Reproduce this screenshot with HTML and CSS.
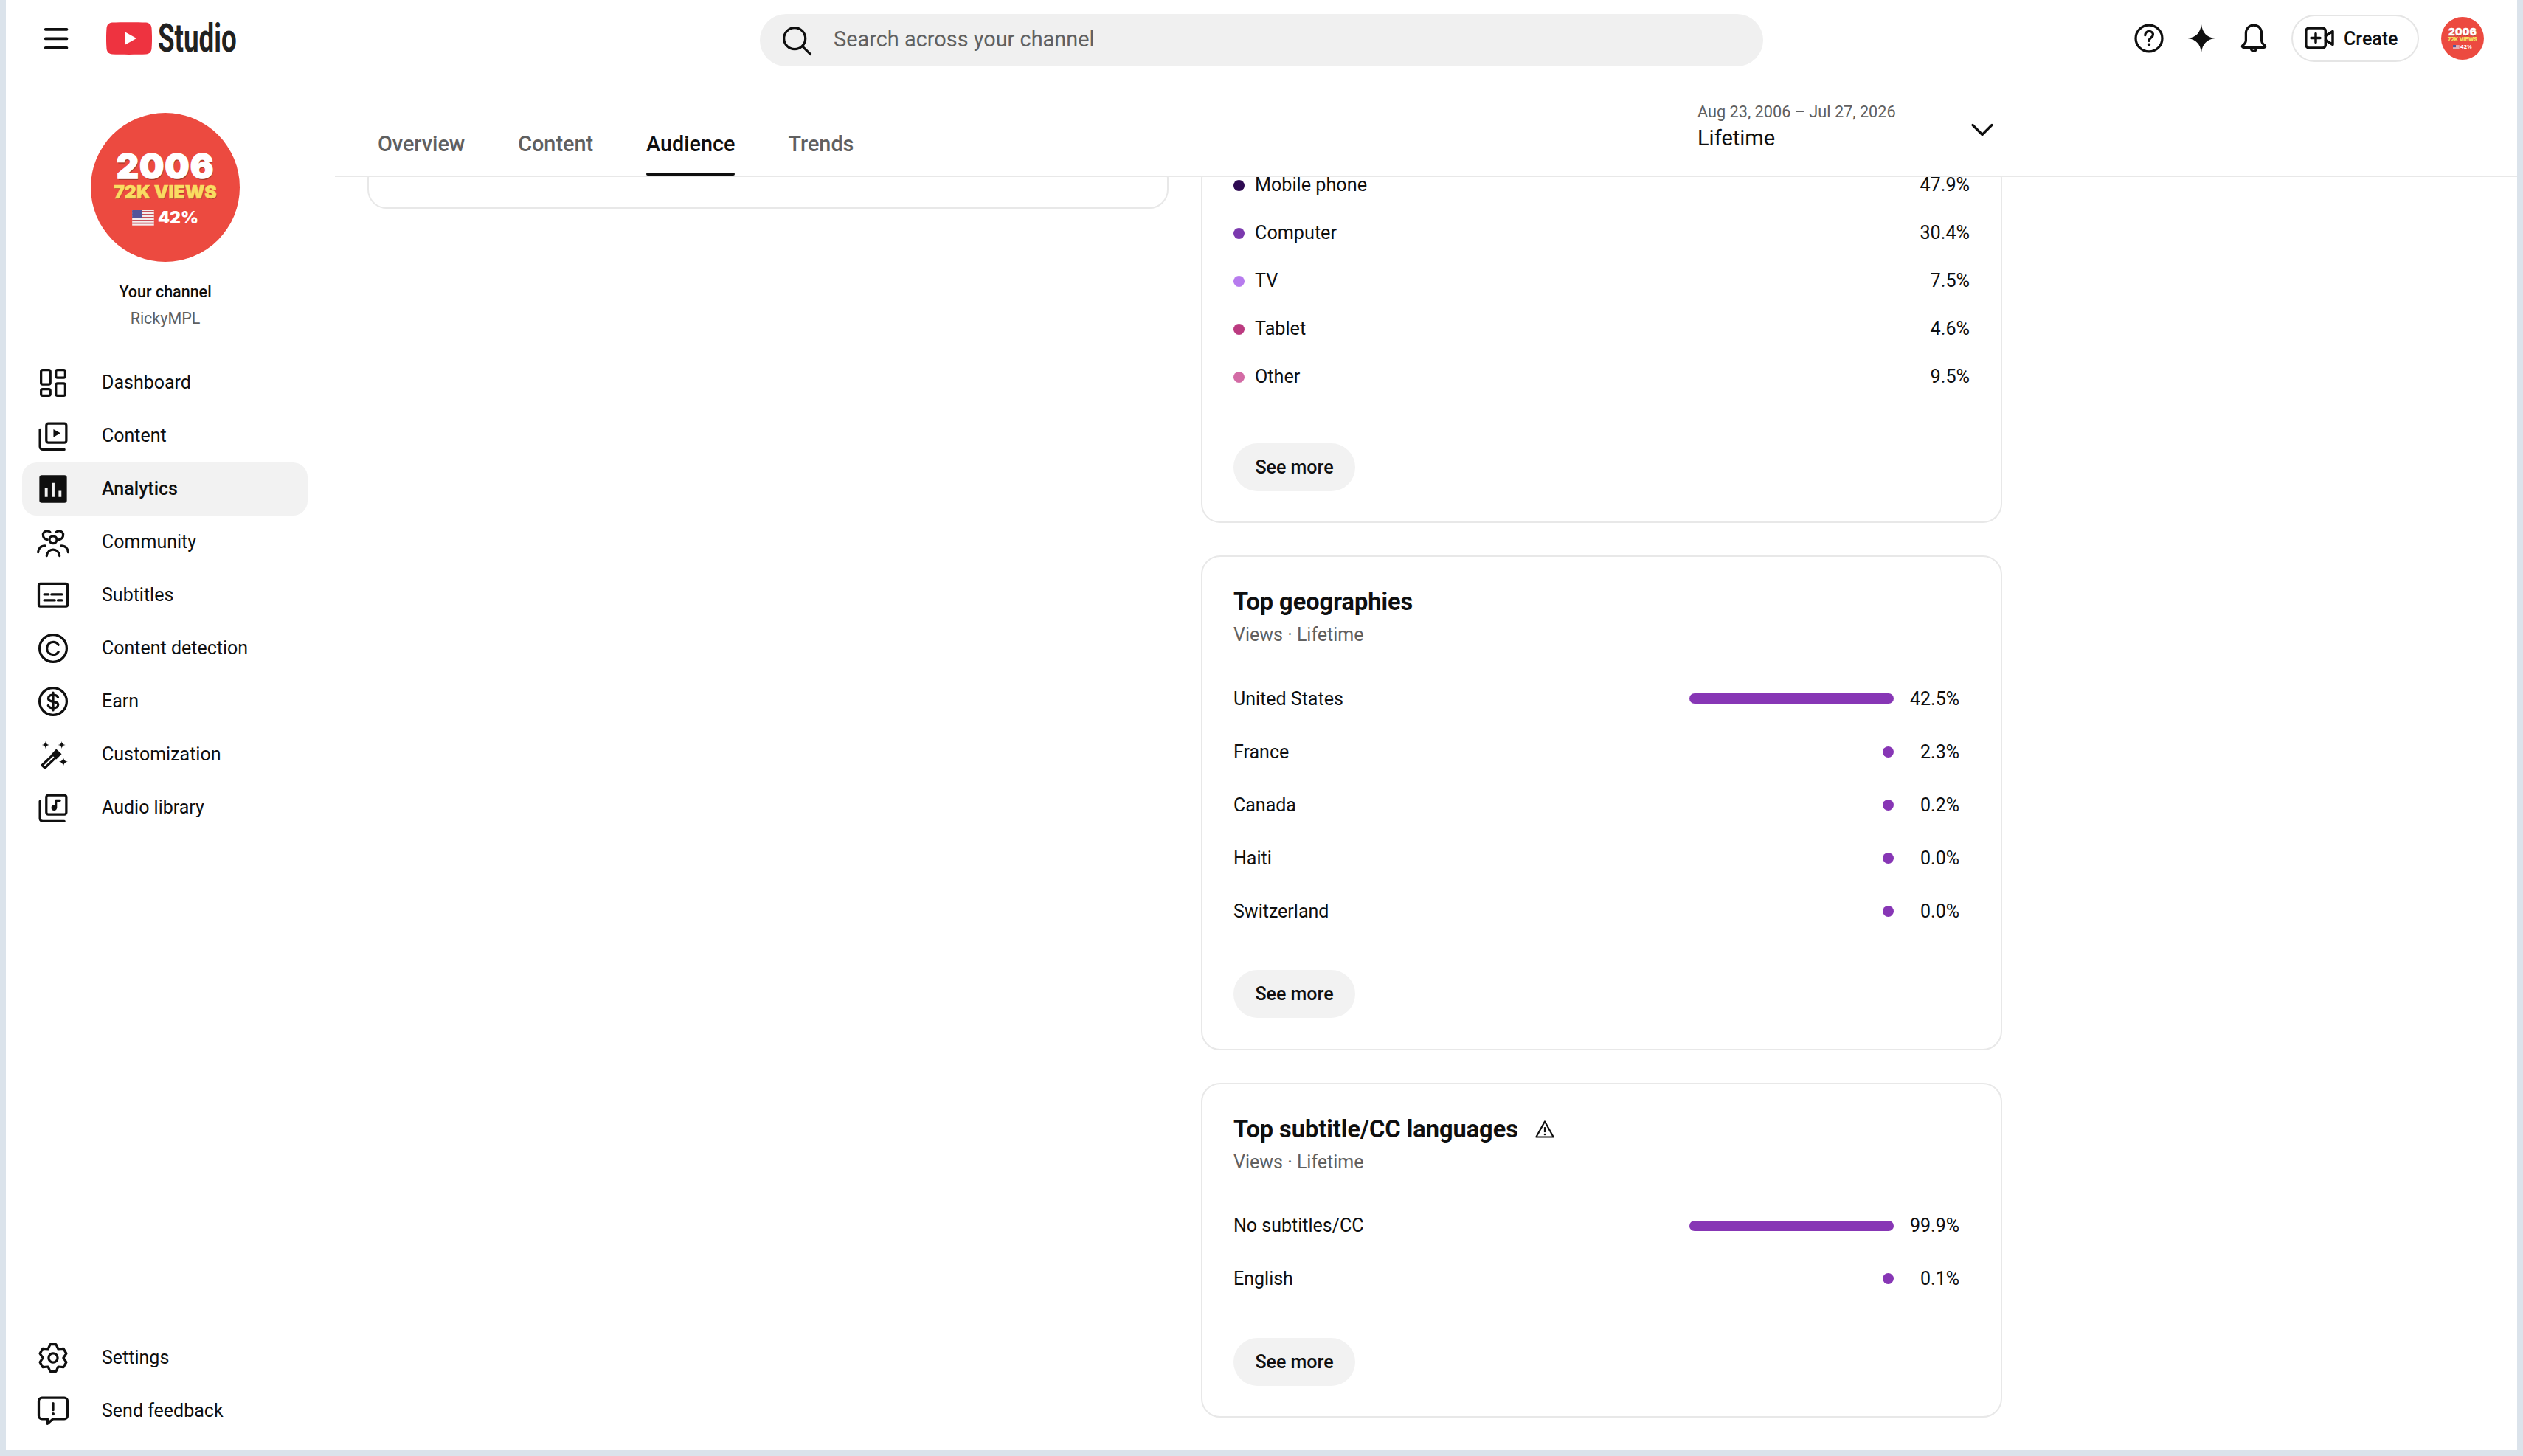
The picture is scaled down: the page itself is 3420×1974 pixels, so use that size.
FILE: index.html
```html
<!DOCTYPE html>
<html lang="en">
<head>
    <meta charset="UTF-8">
    <meta name="viewport" content="width=device-width, initial-scale=1.0">
    <title>Channel analytics - YouTube Studio</title>
    <link rel="stylesheet" href="styles.css">
</head>
<body>
    <div class="app">
        <header class="topbar">
            <div class="brand">
                <svg class="icon" viewBox="0 0 24 24"><path class="line thick" d="M5.400 6.400h13.300M5.400 12.200h13.300M5.400 17.900h13.300"/></svg>
                <svg class="logo-mark" viewBox="0 0 62 44"><path fill="#ee3340" d="M8 0.5C20 0 42 0 54 0.5C58.5 1 61 3.5 61.5 8C62.2 17 62.2 27 61.5 36C61 40.5 58.5 43 54 43.5C42 44 20 44 8 43.5C3.5 43 1 40.5 0.5 36C-0.2 27 -0.2 17 0.5 8C1 3.5 3.5 1 8 0.5Z"/><path fill="#fff" d="M25 13L41 22L25 31Z"/></svg>
                <span class="logo-text">Studio</span>
            </div>
            <div class="search">
                <svg class="icon" viewBox="0 0 24 24"><circle class="line" cx="10.7" cy="10.7" r="6.7"/><path class="line" d="M15.6 15.6L20.5 20.5"/></svg>
                <span class="search-text">Search across your channel</span>
            </div>
            <div class="actions">
                <svg class="icon" viewBox="0 0 24 24"><circle class="line" cx="12" cy="12" r="8.3"/><path class="line" d="M9.6 10c0-1.5 1.1-2.4 2.5-2.4s2.4.9 2.4 2.1c0 1.8-2.5 1.9-2.5 3.9"/><circle cx="12" cy="16" r="1" fill="#0f0f0f"/></svg>
                <svg class="icon" viewBox="0 0 24 24"><path fill="#0f0f0f" d="M12 3.2C12.7 8.5 15.2 11.2 20.5 12C15.2 12.8 12.7 15.5 12 20.8C11.3 15.5 8.8 12.8 3.5 12C8.8 11.2 11.3 8.5 12 3.2Z"/></svg>
                <svg class="icon" viewBox="0 0 24 24"><path class="line" d="M12 3.8c-3 0-4.9 2.2-4.9 5.1v4.2c0 1.4-.8 2.4-2 3.3-.6.5-.3 1.3.4 1.3h13c.7 0 1-.8.4-1.3-1.2-.9-2-1.9-2-3.3V8.900c0-2.900-1.900-5.100-4.900-5.100Z"/><path class="line" d="M10.200 18c0 1.100.8 2 1.800 2s1.800-.9 1.800-2"/></svg>
                <div class="create">
                    <svg class="create-icon" viewBox="0 0 40 32"><rect class="line-px" x="1.800" y="2" width="26.500" height="27" rx="4"/><path class="line-px" d="M15 9.500v12M9 15.500h12"/><path class="line-px" d="M28.500 12.500L38 6.500V24.500L28.500 18.500"/></svg>
                    <span>Create</span>
                </div>
                <div class="avatar avatar-small">
                    <span class="avatar-year">2006</span>
                    <span class="avatar-views">72K VIEWS</span>
                    <span class="avatar-share"><svg class="flag" viewBox="0 0 30 21"><rect width="30" height="21" fill="#f4eeee"/><path stroke="#c8505a" stroke-width="1.800" d="M0 2h30M0 6h30M0 10h30M0 14h30M0 18h30"/><rect width="14" height="11" fill="#52559a"/></svg>42%</span>
                </div>
            </div>
        </header>

        <div class="workspace">
            <aside class="sidebar">
                <div class="channel">
                    <div class="avatar avatar-large">
                        <span class="avatar-year">2006</span>
                        <span class="avatar-views">72K VIEWS</span>
                        <span class="avatar-share"><svg class="flag" viewBox="0 0 30 21"><rect width="30" height="21" fill="#f4eeee"/><path stroke="#c8505a" stroke-width="1.800" d="M0 2h30M0 6h30M0 10h30M0 14h30M0 18h30"/><rect width="14" height="11" fill="#52559a"/></svg>42%</span>
                    </div>
                    <div class="channel-title">Your channel</div>
                    <div class="channel-name">RickyMPL</div>
                </div>
                <nav class="nav">
                    <a class="nav-item">
                        <svg class="icon" viewBox="0 0 24 24"><rect class="line" x="4.450" y="4" width="5.800" height="9" rx="1"/><rect class="line" x="4.450" y="16" width="5.800" height="4" rx="1"/><rect class="line" x="13.750" y="4" width="5.800" height="4.800" rx="1"/><rect class="line" x="13.750" y="12.400" width="5.800" height="7.600" rx="1"/></svg>
                        Dashboard
                    </a>
                    <a class="nav-item">
                        <svg class="icon" viewBox="0 0 24 24"><rect class="line" x="7.750" y="4.250" width="12.500" height="12" rx="1.200"/><path class="line" d="M3.750 8v10.700c0 1 .8 1.800 1.800 1.800H19"/><path fill="#0f0f0f" d="M12.200 7.800L16.600 10.300L12.200 12.800Z"/></svg>
                        Content
                    </a>
                    <a class="nav-item active">
                        <svg class="icon" viewBox="0 0 24 24"><rect x="3.400" y="3.400" width="17.200" height="17.200" rx="1.500" fill="#0f0f0f"/><path stroke="#f2f2f2" stroke-width="1.800" d="M7.700 17v-5.500M12 17V8.200M16.300 17v-3.800"/></svg>
                        Analytics
                    </a>
                    <a class="nav-item">
                        <svg class="icon" viewBox="0 0 24 24"><circle class="line" cx="12" cy="10.500" r="2.300"/><path class="line" d="M8 20.600c.3-2.400 1.900-3.900 4-3.900s3.700 1.500 4 3.900"/><path class="line" d="M8.300 10.400C6.700 10.200 5.700 9 5.700 7.500S6.800 5 8.200 5c.8 0 1.400.2 1.900.7"/><path class="line" d="M15.700 10.400c1.600-.2 2.600-1.400 2.600-2.900S17.200 5 15.800 5c-.8 0-1.400.2-1.900.7"/><path class="line" d="M2.600 18.300c.2-2.500 1.800-4.100 4.400-4.100"/><path class="line" d="M21.400 18.300c-.2-2.500-1.800-4.100-4.400-4.100"/></svg>
                        Community
                    </a>
                    <a class="nav-item">
                        <svg class="icon" viewBox="0 0 24 24"><rect class="line" x="3" y="4.800" width="18" height="14.200" rx="1"/><path class="line" d="M6.500 11.500h2.600M11 11.500h6.500M6.500 15.200h6.500M15 15.200h2.500"/></svg>
                        Subtitles
                    </a>
                    <a class="nav-item">
                        <svg class="icon" viewBox="0 0 24 24"><circle class="line" cx="12" cy="12" r="8.500"/><path class="line" d="M15.300 9.800c-.7-1.200-1.900-1.800-3.200-1.800-2.300 0-4 1.700-4 4s1.700 4 4 4c1.300 0 2.500-.6 3.200-1.800"/></svg>
                        Content detection
                    </a>
                    <a class="nav-item">
                        <svg class="icon" viewBox="0 0 24 24"><circle class="line" cx="12" cy="12" r="8.500"/><path class="line" d="M15 9.400c-.5-1-1.600-1.500-3-1.500-1.700 0-3 .8-3 2.100 0 3 6.100 1.300 6.100 4.100 0 1.300-1.400 2.100-3.100 2.100-1.500 0-2.600-.6-3.100-1.700M12 6.500v11"/></svg>
                        Earn
                    </a>
                    <a class="nav-item">
                        <svg class="icon" viewBox="0 0 24 24"><path fill="#0f0f0f" d="M7.300 3.700Q7.500 5.800 9.600 6Q7.500 6.200 7.300 8.300Q7.100 6.200 5 6Q7.100 5.800 7.300 3.700ZM17.400 3.700Q17.600 5.800 19.700 6Q17.600 6.200 17.400 8.300Q17.200 6.200 15.100 6Q17.200 5.800 17.400 3.700ZM18.400 13.700Q18.700 16.200 21.200 16.500Q18.700 16.800 18.400 19.300Q18.100 16.800 15.600 16.500Q18.100 16.200 18.400 13.700Z"/><path class="line" d="M5.100 18.700L13.300 10.800L15 12.500L6.900 20.300Z"/><path stroke="#0f0f0f" stroke-width="2.400" d="M12.500 11.800L14 13.300L15.600 11.700L14 10.200Z"/></svg>
                        Customization
                    </a>
                    <a class="nav-item">
                        <svg class="icon" viewBox="0 0 24 24"><rect class="line" x="7.750" y="4.250" width="12.500" height="12" rx="1.200"/><path class="line" d="M3.750 8v10.700c0 1 .8 1.800 1.800 1.800H19"/><circle cx="12.600" cy="12.100" r="1.700" fill="#0f0f0f"/><path class="line" d="M13.700 12V7.500h2.500"/></svg>
                        Audio library
                    </a>
                </nav>
                <nav class="nav nav-bottom">
                    <a class="nav-item">
                        <svg class="icon" viewBox="0 0 24 24"><polygon class="line" points="10.200,3.500 13.800,3.500 15.200,6.460 18.460,6.190 20.260,9.310 18.400,12 20.260,14.690 18.460,17.810 15.200,17.540 13.800,20.500 10.200,20.500 8.800,17.540 5.540,17.810 3.740,14.690 5.600,12 3.740,9.310 5.540,6.190 8.800,6.460"/><circle class="line" cx="12" cy="12" r="2.800"/></svg>
                        Settings
                    </a>
                    <a class="nav-item">
                        <svg class="icon" viewBox="0 0 24 24"><path class="line" d="M5 3.750H19a2 2 0 0 1 2 2V15a2 2 0 0 1-2 2H12L8.500 20V17H5a2 2 0 0 1-2-2V5.750a2 2 0 0 1 2-2Z"/><path class="line" d="M12 7.200v4.200"/><circle cx="12" cy="13.900" r=".95" fill="#0f0f0f"/></svg>
                        Send feedback
                    </a>
                </nav>
            </aside>

            <main class="main">
                <div class="tabs-bar">
                    <div class="tabs">
                        <a class="tab">Overview</a>
                        <a class="tab">Content</a>
                        <a class="tab active">Audience</a>
                        <a class="tab">Trends</a>
                    </div>
                    <div class="date-range">
                        <div>
                            <div class="date-span">Aug 23, 2006 – Jul 27, 2026</div>
                            <div class="date-label">Lifetime</div>
                        </div>
                        <svg class="icon chevron" viewBox="0 0 24 24"><path class="line" d="M6 9L12 15L18 9"/></svg>
                    </div>
                </div>

                <div class="scroller">
                    <div class="columns">
                        <div class="column">
                            <section class="card card-stub"></section>
                        </div>
                        <div class="column">
                            <section class="card card-devices">
                                <div class="legend-row"><i class="dot dot-mobile"></i><span class="legend-name">Mobile phone</span><span>47.9%</span></div>
                                <div class="legend-row"><i class="dot dot-computer"></i><span class="legend-name">Computer</span><span>30.4%</span></div>
                                <div class="legend-row"><i class="dot dot-tv"></i><span class="legend-name">TV</span><span>7.5%</span></div>
                                <div class="legend-row"><i class="dot dot-tablet"></i><span class="legend-name">Tablet</span><span>4.6%</span></div>
                                <div class="legend-row"><i class="dot dot-other"></i><span class="legend-name">Other</span><span>9.5%</span></div>
                                <button class="see-more see-more-wide">See more</button>
                            </section>

                            <section class="card">
                                <h2 class="card-title">Top geographies</h2>
                                <div class="card-sub">Views · Lifetime</div>
                                <div class="rows">
                                    <div class="row"><span class="row-name">United States</span><div class="track"><div class="bar"></div></div><span class="pct">42.5%</span></div>
                                    <div class="row"><span class="row-name">France</span><div class="track"><i class="bar-dot"></i></div><span class="pct">2.3%</span></div>
                                    <div class="row"><span class="row-name">Canada</span><div class="track"><i class="bar-dot"></i></div><span class="pct">0.2%</span></div>
                                    <div class="row"><span class="row-name">Haiti</span><div class="track"><i class="bar-dot"></i></div><span class="pct">0.0%</span></div>
                                    <div class="row"><span class="row-name">Switzerland</span><div class="track"><i class="bar-dot"></i></div><span class="pct">0.0%</span></div>
                                </div>
                                <button class="see-more">See more</button>
                            </section>

                            <section class="card">
                                <h2 class="card-title">Top subtitle/CC languages
                                    <svg class="warn" viewBox="0 0 24 24"><path class="warn-line" d="M12 3L22 21H2Z"/><path class="warn-line" d="M12 9.500v6"/><circle cx="12" cy="18" r="1.100" fill="#0f0f0f"/></svg>
                                </h2>
                                <div class="card-sub">Views · Lifetime</div>
                                <div class="rows">
                                    <div class="row"><span class="row-name">No subtitles/CC</span><div class="track"><div class="bar"></div></div><span class="pct">99.9%</span></div>
                                    <div class="row"><span class="row-name">English</span><div class="track"><i class="bar-dot"></i></div><span class="pct">0.1%</span></div>
                                </div>
                                <button class="see-more">See more</button>
                            </section>
                        </div>
                    </div>
                </div>
            </main>
        </div>
    </div>
</body>
</html>
```

FILE: styles.css
```css
* {
    margin: 0;
    padding: 0;
    box-sizing: border-box;
}

body {
    font-family: 'Roboto', sans-serif;
    background: #dbe3eb;
    color: #0f0f0f;
    height: 1974px;
    padding: 0 8px 8px;
    overflow: hidden;
}

.app {
    background: #fff;
    height: 1966px;
    display: flex;
    flex-direction: column;
    overflow: hidden;
}

.icon {
    width: 52px;
    height: 52px;
    flex: none;
    display: block;
}

.line {
    fill: none;
    stroke: #0f0f0f;
    stroke-width: 1.5;
    stroke-linecap: round;
    stroke-linejoin: round;
}

.thick {
    stroke-width: 1.7;
}

.line-px {
    fill: none;
    stroke: #0f0f0f;
    stroke-width: 3.500;
    stroke-linecap: round;
    stroke-linejoin: round;
}

/* top bar */
.topbar {
    height: 104px;
    flex: none;
    display: flex;
    align-items: center;
}

.brand {
    width: 1022px;
    display: flex;
    align-items: center;
    padding-left: 42px;
}

.logo-mark {
    width: 62px;
    height: 44px;
    margin-left: 42px;
}

.logo-text {
    font-weight: 700;
    font-size: 54px;
    line-height: 44px;
    color: #212121;
    margin-left: 8px;
    transform: scaleX(0.68);
    transform-origin: left center;
}

.search {
    width: 1360px;
    height: 71px;
    margin-top: 5px;
    border-radius: 36px;
    background: #f0f0f0;
    display: flex;
    align-items: center;
    gap: 24px;
    padding-left: 24px;
    font-size: 28.900px;
    color: #606060;
}

.search-text {
    padding-bottom: 3px;
}

.actions {
    flex: 1;
    display: flex;
    align-items: center;
    justify-content: flex-end;
    gap: 19px;
    padding-right: 45px;
}

.create {
    width: 173px;
    height: 64px;
    margin-left: 6px;
    border: 2px solid #e5e5e5;
    border-radius: 32px;
    display: flex;
    align-items: center;
    gap: 13px;
    padding-left: 16px;
    font-size: 25px;
    font-weight: 500;
}

.create-icon {
    width: 40px;
    height: 32px;
    flex: none;
}

/* channel thumbnail, sized in em so both copies share it */
.avatar {
    border-radius: 50%;
    background: #ec4a40;
    color: #fff;
    font-family: 'Inter', 'Liberation Sans', sans-serif;
    font-weight: 900;
    display: flex;
    flex-direction: column;
    align-items: center;
    justify-content: center;
    flex: none;
    line-height: 1;
    overflow: hidden;
}

.avatar-large {
    width: 202px;
    height: 202px;
    font-size: 10px;
}

.avatar-small {
    width: 58px;
    height: 58px;
    margin-left: 11px;
    font-size: 2.870px;
}

.avatar-year {
    font-size: 4.700em;
    letter-spacing: 0.02em;
    -webkit-text-stroke: 0.03em #fff;
    text-shadow: 0.02em 0.04em 0 #a83a2a;
}

.avatar-views {
    font-size: 2.480em;
    color: #f9dc62;
    -webkit-text-stroke: 0.02em #f9dc62;
    text-shadow: 0.03em 0.05em 0 #a83a2a;
}

.avatar-share {
    font-size: 2.300em;
    display: flex;
    align-items: center;
    gap: 0.22em;
    margin-top: 0.5em;
}

.flag {
    width: 1.300em;
    height: 0.900em;
}

/* sidebar */
.workspace {
    flex: 1;
    display: flex;
    min-height: 0;
}

.sidebar {
    width: 446px;
    flex: none;
    display: flex;
    flex-direction: column;
    padding-bottom: 17px;
}

.channel {
    width: 432px;
    display: flex;
    flex-direction: column;
    align-items: center;
    padding-top: 49px;
    height: 379px;
}

.channel-title {
    font-size: 21.500px;
    font-weight: 500;
    line-height: 36px;
    margin-top: 23px;
}

.channel-name {
    font-size: 21.500px;
    line-height: 36px;
    color: #606060;
}

.nav-bottom {
    margin-top: auto;
}

.nav-item {
    width: 387px;
    height: 72px;
    margin-left: 22px;
    border-radius: 20px;
    display: flex;
    align-items: center;
    gap: 40px;
    padding-left: 16px;
    padding-bottom: 1px;
    font-size: 25px;
}

.nav-item.active {
    background: #f2f2f2;
    font-weight: 500;
}

/* tabs */
.main {
    flex: 1;
    min-width: 0;
    display: flex;
    flex-direction: column;
}

.tabs-bar {
    height: 136px;
    flex: none;
    display: flex;
    border-bottom: 2px solid #e8e8e8;
}

.tabs {
    width: 1847px;
    display: flex;
    gap: 72px;
    padding-left: 58px;
}

.tab {
    position: relative;
    padding-top: 73px;
    font-size: 28.800px;
    line-height: 36px;
    font-weight: 500;
    color: #606060;
}

.tab.active {
    color: #0f0f0f;
}

.tab.active::after {
    content: "";
    position: absolute;
    left: 0;
    right: 0;
    bottom: 0;
    height: 4px;
    border-radius: 2px;
    background: #0f0f0f;
}

.date-range {
    width: 412px;
    display: flex;
    justify-content: space-between;
    padding-top: 32px;
}

.date-span {
    font-size: 21.700px;
    line-height: 32px;
    color: #606060;
}

.date-label {
    font-size: 29px;
    line-height: 38px;
}

.chevron {
    margin-top: 14px;
}

/* cards */
.scroller {
    flex: 1;
    min-height: 0;
    overflow: hidden;
}

.columns {
    display: flex;
    gap: 44px;
    padding-left: 44px;
    margin-top: -23.500px;
}

.column {
    width: 1086px;
    display: flex;
    flex-direction: column;
    gap: 44px;
}

.card {
    border: 2px solid #e8e8e8;
    border-radius: 26px;
    padding: 39px 42px 41.500px;
}

.card-stub {
    height: 66.500px;
    padding: 0;
}

.card-devices {
    padding-top: 0;
    border-top-color: transparent;
}

.legend-row {
    height: 65px;
    display: flex;
    align-items: center;
    font-size: 25.200px;
    line-height: 20px;
}

.legend-name {
    flex: 1;
}

.dot {
    width: 15px;
    height: 15px;
    border-radius: 50%;
    margin-right: 14px;
}

.dot-mobile { background: #2e0a52; }
.dot-computer { background: #7b39ae; }
.dot-tv { background: #b77bee; }
.dot-tablet { background: #bb3a80; }
.dot-other { background: #d36ba5; }

.card-title {
    font-size: 32.500px;
    font-weight: 700;
    line-height: 44px;
    display: flex;
    align-items: center;
}

.warn {
    width: 28px;
    height: 28px;
    margin-left: 22px;
}

.warn-line {
    fill: none;
    stroke: #0f0f0f;
    stroke-width: 1.900;
    stroke-linejoin: round;
}

.card-sub {
    font-size: 25px;
    line-height: 36px;
    margin-top: 5px;
    color: #606060;
}

.rows {
    margin-top: 32px;
    padding-right: 14px;
}

.row {
    height: 72px;
    display: flex;
    align-items: center;
    font-size: 25px;
}

.row-name {
    flex: 1;
}

.track {
    width: 277px;
    display: flex;
    justify-content: flex-end;
}

.bar {
    width: 100%;
    height: 14px;
    border-radius: 7px;
    background: #8736b5;
}

.bar-dot {
    width: 15px;
    height: 15px;
    border-radius: 50%;
    background: #8736b5;
}

.pct {
    width: 89px;
    text-align: right;
}

.see-more {
    display: block;
    width: 165px;
    height: 65px;
    margin-top: 44px;
    border: none;
    border-radius: 33px;
    background: #f2f2f2;
    color: #0f0f0f;
    font-family: inherit;
    font-size: 25px;
    font-weight: 500;
}

.see-more-wide {
    margin-top: 57px;
}
```
